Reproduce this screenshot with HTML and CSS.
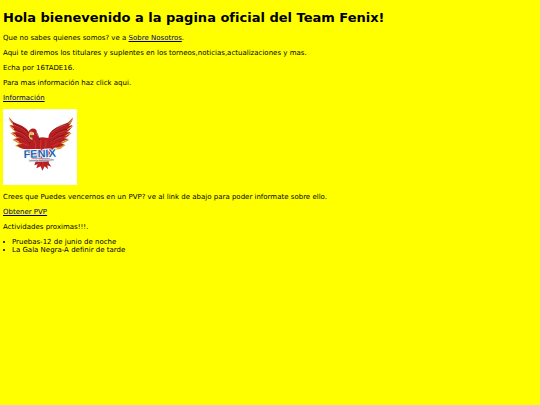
FILE: index.html
```html
<!DOCTYPE html>
<html lang="es">
<head>
<meta charset="utf-8">
<title>Team Fenix</title>
<link rel="stylesheet" href="styles.css">
</head>
<body>
<h1>Hola bienevenido a la pagina oficial del Team Fenix!</h1>
<p>Que no sabes quienes somos? ve a <a href="#nosotros">Sobre Nosotros</a>.</p>
<p>Aqui te diremos los titulares y suplentes en los torneos,noticias,actualizaciones y mas.</p>
<p>Echa por 16TADE16.</p>
<p>Para mas información haz click aqui.</p>
<p><a href="#informacion">Información</a></p>
<svg class="logo" viewBox="10 12 222 228" role="img" aria-label="Fenix">
  <rect x="10" y="12" width="222" height="228" fill="#fff"/>
  <g fill="#d99a3c">
    <path d="M26 34 L44 54 L80 72 L94 100 L92 128 L70 132 L46 122 L58 116 L38 104 L52 100 L32 84 L47 82 L28 62 L42 64Z"/>
    <path d="M221 36 L203 54 L166 72 L148 94 L150 120 L164 134 L182 132 L198 120 L188 116 L210 104 L196 102 L216 84 L202 84 L221 62 L206 66Z"/>
  </g>
  <g fill="#b51f22">
    <path d="M29 38 C38 57 64 55 83 74 L98 99 L110 100 L128 97 L146 99 C148 78 166 69 190 61 Q210 53 219 39 Q217 54 207 62 Q214 62 218 60 Q213 76 199 81 Q207 82 212 81 Q206 97 191 99 Q199 102 205 101 Q196 113 181 114 Q188 118 193 117 Q184 128 165 127 L151 151 Q153 165 147 173 L155 185 L143 181 L145 193 L135 184 L128 197 L123 184 L110 190 L114 178 L104 181 L108 169 Q87 159 83 134 Q63 132 52 121 L68 116 Q47 110 43 102 L61 98 Q40 92 36 83 L54 81 Q35 71 31 60 L46 62 Q31 53 29 38Z"/>
    <path d="M85 84 Q91 67 105 71 Q113 74 111 85 L119 103 L117 138 L86 142 Q89 119 98 108 Q84 99 85 84Z"/>
  </g>
  <g fill="none" stroke="#dc4139" stroke-width="2">
    <path d="M42 60 Q62 64 83 83 M45 77 Q66 82 85 99 M54 95 Q70 98 87 112 M65 113 L86 122"/>
    <path d="M203 59 Q177 64 157 83 M198 77 Q174 82 156 98 M188 96 Q171 98 155 112 M178 114 L159 123"/>
    <path d="M103 105 Q112 119 107 137 M124 104 L122 139 M139 104 Q141 120 132 137 M117 174 L119 182 M130 172 L130 190"/>
  </g>
  <g fill="none" stroke="#6d1119" stroke-width="2">
    <path d="M39 55 Q67 64 88 84 M42 72 Q70 80 88 99 M50 89 Q74 97 91 116"/>
    <path d="M207 55 Q178 60 157 79 M204 72 Q177 76 157 96 M194 90 Q170 95 156 109 M112 83 L120 105"/>
  </g>
  <g fill="none" stroke="#f3bd57" stroke-width="3">
    <path d="M28 42 L39 56 M31 63 L43 72 M37 84 L49 92 M45 104 L58 111"/>
    <path d="M219 44 L207 57 M216 65 L203 74 M210 85 L197 93 M201 105 L186 112"/>
  </g>
  <path d="M88 86 Q90 75 101 82 L104 91 L96 90 L99 105 Q84 101 88 86Z" fill="#efba69"/>
  <path d="M91 90 L97 91 L96 99 Q89 97 91 90Z" fill="#634b38"/>
  <circle cx="101" cy="85" r="2" fill="#fff"/>
  <g transform="rotate(-2 122 143)">
    <text class="logo-name" x="120" y="157">FENIX</text>
    <path d="M86 161 L157 161 L157 170 L86 170Z" fill="#e9edf4"/>
    <text class="logo-caption" x="88" y="168">escuela multideportes</text>
  </g>
</svg>
<p>Crees que Puedes vencernos en un PVP? ve al link de abajo para poder informate sobre ello.</p>
<p><a href="#pvp">Obtener PVP</a></p>
<p>Actividades proximas!!!.</p>
<ul>
<li>Pruebas-12 de junio de noche</li>
<li>La Gala Negra-A definir de tarde</li>
</ul>
</body>
</html>
```
FILE: styles.css
```css
body {
  margin: 9px 3px;
  background: #ff0;
  color: #000;
  font: 7px/8px "DejaVu Sans", Verdana, sans-serif;
}

h1 {
  margin: 0 0 8px;
  font-size: 13px;
  line-height: 17px;
}

p {
  margin: 0 0 7px;
}

a {
  color: #00005c;
}

.logo {
  display: block;
  width: 74px;
  height: 76px;
  margin-bottom: 8px;
}

.logo-name {
  fill: #1b69b5;
  stroke: #fff;
  stroke-width: 5px;
  paint-order: stroke;
  text-anchor: middle;
  font: bold 33px "Liberation Sans", sans-serif;
}

.logo-caption {
  fill: #24426c;
  font: bold 7px "Liberation Sans", sans-serif;
}

ul {
  margin: 0;
  padding: 0;
  list-style: none;
}

li {
  display: flex;
  align-items: center;
}

li::before {
  content: "";
  width: 2px;
  height: 2px;
  margin-right: 7px;
  border-radius: 50%;
  background: #000;
}
```
